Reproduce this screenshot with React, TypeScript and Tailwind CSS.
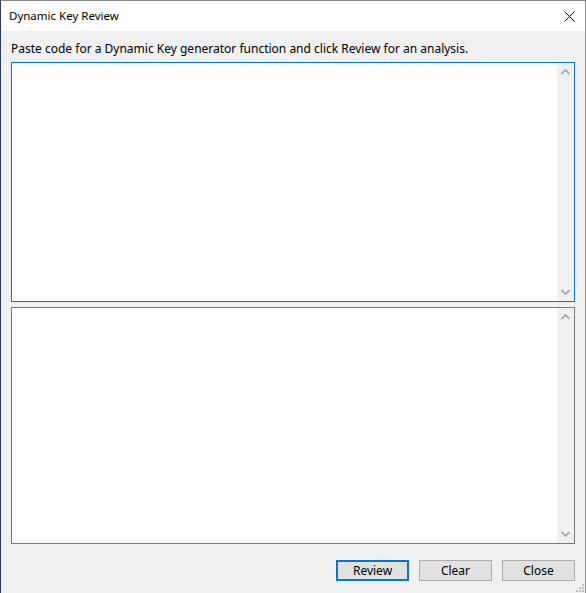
import React from "react";

const font = { fontFamily: '"Segoe UI", "Noto Sans", "Open Sans", sans-serif' };

const Chevron = ({ up }: { up?: boolean }) => (
  <svg width="9" height="6" viewBox="0 0 9 6" className="block">
    <path
      d={up ? "M0.5 5 L4.5 1 L8.5 5" : "M0.5 1 L4.5 5 L8.5 1"}
      fill="none"
      stroke="#a3a3a3"
      strokeWidth="1.6"
    />
  </svg>
);

const TextBox = ({ focused, className }: { focused?: boolean; className: string }) => (
  <div
    className={`flex bg-white border ${
      focused ? "border-[#0078d7]" : "border-[#7a7a7a]"
    } ${className}`}
  >
    <textarea className="flex-1 resize-none outline-none bg-white" />
    <div className="w-[17px] bg-[#f0f0f0] flex flex-col justify-between items-center py-[6px]">
      <Chevron up />
      <Chevron />
    </div>
  </div>
);

const Button = ({ label, isDefault }: { label: string; isDefault?: boolean }) => (
  <button
    className={`w-[73px] h-[21px] bg-[#e1e1e1] text-[12px] leading-none text-black ${
      isDefault ? "border-2 border-[#0078d7]" : "border border-[#adadad]"
    }`}
  >
    {label}
  </button>
);

export default function App() {
  return (
    <div
      className="w-[586px] h-[593px] flex flex-col border-l border-l-[#2b3a6e] border-t border-r border-[#8c8c8c] bg-[#f0f0f0] text-black"
      style={font}
    >
      {/* title bar */}
      <div className="h-[30px] bg-white flex items-center justify-between pl-[8px] pr-[10px]">
        <span className="text-[11.5px]">Dynamic Key Review</span>
        <svg width="11" height="11" viewBox="0 0 11 11">
          <path d="M0.5 0.5 L10.5 10.5 M10.5 0.5 L0.5 10.5" stroke="#000" strokeWidth="1" />
        </svg>
      </div>

      {/* body */}
      <div className="flex-1 flex flex-col px-[10px]">
        <div className="h-[31px] flex items-center pt-[4px] text-[12px]">
          Paste code for a Dynamic Key generator function and click Review for an analysis.
        </div>
        <TextBox focused className="h-[240px]" />
        <TextBox className="h-[237px] mt-[5px]" />
        <div className="flex justify-end gap-[10px] mt-[16px]">
          <Button label="Review" isDefault />
          <Button label="Clear" />
          <Button label="Close" />
        </div>
      </div>

      {/* resize grip */}
      <div className="flex justify-end pr-[1px] pb-[1px]">
        <svg width="9" height="9" viewBox="0 0 9 9">
          {[
            [7, 1],
            [4, 4],
            [7, 4],
            [1, 7],
            [4, 7],
            [7, 7],
          ].map(([x, y], i) => (
            <rect key={i} x={x} y={y} width="2" height="2" fill="#bcbcbc" />
          ))}
        </svg>
      </div>
    </div>
  );
}
